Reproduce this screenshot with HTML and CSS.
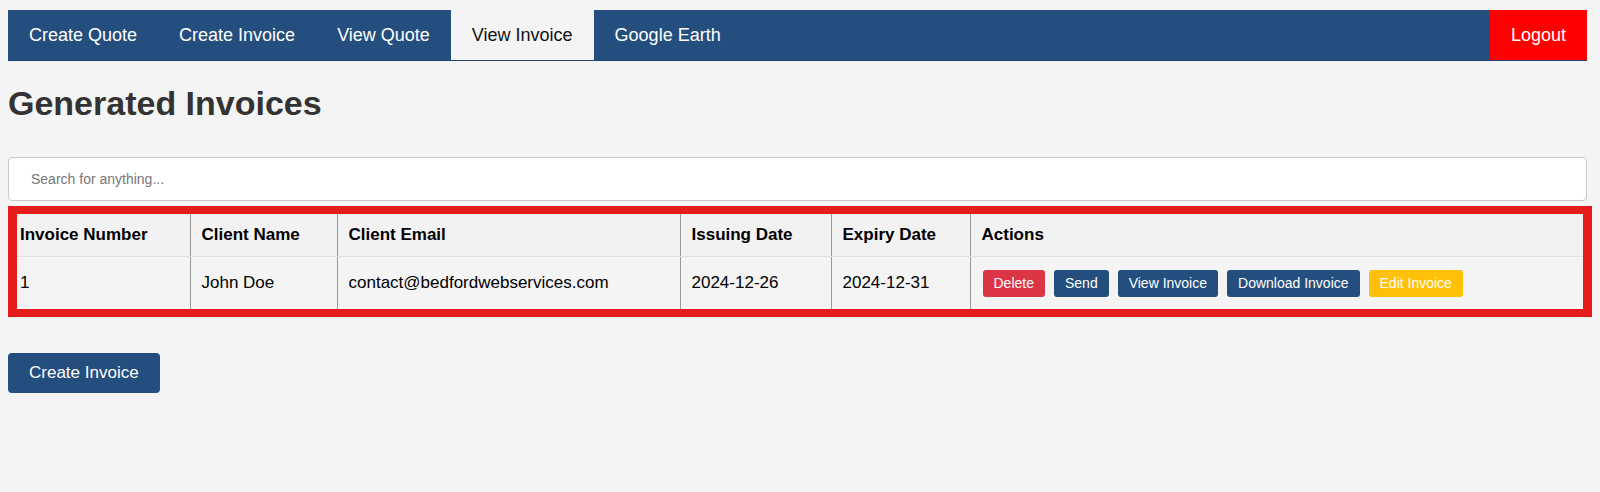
FILE: index.html
```html
<!DOCTYPE html>
<html>
<head>
<meta charset="utf-8">
<link rel="stylesheet" href="styles.css">
</head>
<body>
<div class="page">
  <nav class="topnav">
    <a class="nav-link">Create Quote</a>
    <a class="nav-link">Create Invoice</a>
    <a class="nav-link">View Quote</a>
    <a class="nav-link active">View Invoice</a>
    <a class="nav-link">Google Earth</a>
    <a class="nav-link logout">Logout</a>
  </nav>
  <h1 class="title">Generated Invoices</h1>
  <input class="search" type="text" placeholder="Search for anything...">
  <div class="table-frame">
    <table class="invoices">
      <colgroup>
        <col class="c1"><col class="c2"><col class="c3"><col class="c4"><col class="c5"><col>
      </colgroup>
      <thead>
        <tr>
          <th>Invoice Number</th>
          <th>Client Name</th>
          <th>Client Email</th>
          <th>Issuing Date</th>
          <th>Expiry Date</th>
          <th>Actions</th>
        </tr>
      </thead>
      <tbody>
        <tr>
          <td>1</td>
          <td>John Doe</td>
          <td>contact@bedfordwebservices.com</td>
          <td>2024-12-26</td>
          <td>2024-12-31</td>
          <td class="actions">
            <button class="btn btn-red">Delete</button>
            <button class="btn btn-blue">Send</button>
            <button class="btn btn-blue">View Invoice</button>
            <button class="btn btn-blue">Download Invoice</button>
            <button class="btn btn-yellow">Edit Invoice</button>
          </td>
        </tr>
      </tbody>
    </table>
  </div>
  <button class="create-btn">Create Invoice</button>
</div>
</body>
</html>
```
FILE: styles.css
```css
html, body {
  margin: 0;
  padding: 0;
  background: #f4f4f4;
}
body {
  font-family: "Liberation Sans", Arial, sans-serif;
  color: #000;
}
.page {
  width: 1584px;
  padding: 10px 0 0 8px;
}
.topnav {
  display: flex;
  width: 1579px;
  height: 50px;
  background: #244e7e;
  box-shadow: 0 1px 0 #1d4370;
}
.nav-link {
  display: flex;
  align-items: center;
  padding: 0 21px;
  font-size: 18px;
  color: #fff;
  text-decoration: none;
}
.nav-link.active {
  background: #f4f4f4;
  color: #111;
}
.nav-link.logout {
  margin-left: auto;
  background: #ff0000;
}
.title {
  margin: 24px 0 0 0;
  font-size: 34px;
  line-height: 39px;
  font-weight: bold;
  color: #333;
}
.search {
  display: block;
  box-sizing: border-box;
  margin: 34px 0 0 0;
  width: 1579px;
  height: 44px;
  padding: 0 22px;
  border: 1px solid #c8c8c8;
  border-radius: 4px;
  background: #fff;
  font-family: "Liberation Sans", Arial, sans-serif;
  font-size: 14px;
  outline: none;
}
.search::placeholder {
  color: #777;
}
.table-frame {
  margin-top: 5px;
  width: 1584px;
  box-sizing: border-box;
  border: 8px solid #e41c1c;
  border-left-width: 9px;
  border-right-width: 9px;
  background: #f2f2f2;
}
.invoices {
  width: 100%;
  table-layout: fixed;
  border-collapse: collapse;
  font-size: 17px;
}
.c1 { width: 173px; }
.c2 { width: 147px; }
.c3 { width: 343px; }
.c4 { width: 151px; }
.c5 { width: 139px; }
.invoices th, .invoices td {
  text-align: left;
  padding: 0 11px;
  border-left: 1px solid #999;
  white-space: nowrap;
}
.invoices th:first-child, .invoices td:first-child {
  border-left: none;
  padding-left: 3px;
}
.invoices th {
  height: 42px;
  font-weight: bold;
  background: #f2f2f2;
  border-bottom: 1px solid #e2e2e2;
}
.invoices td {
  height: 52px;
  background: #f4f4f4;
}
.actions {
  font-size: 0;
}
.btn {
  height: 27px;
  padding: 0 11px;
  margin-right: 9px;
  border: none;
  border-radius: 3px;
  font-family: "Liberation Sans", Arial, sans-serif;
  font-size: 14px;
  color: #fff;
  vertical-align: middle;
}
.btn:first-child {
  margin-left: 1px;
}
.btn-red { background: #dc3545; }
.btn-blue { background: #244e7e; }
.btn-yellow { background: #ffc107; }
.create-btn {
  display: block;
  margin-top: 36px;
  height: 40px;
  padding: 0 21px;
  border: none;
  border-radius: 4px;
  background: #244e7e;
  color: #fff;
  font-family: "Liberation Sans", Arial, sans-serif;
  font-size: 17px;
}
```
